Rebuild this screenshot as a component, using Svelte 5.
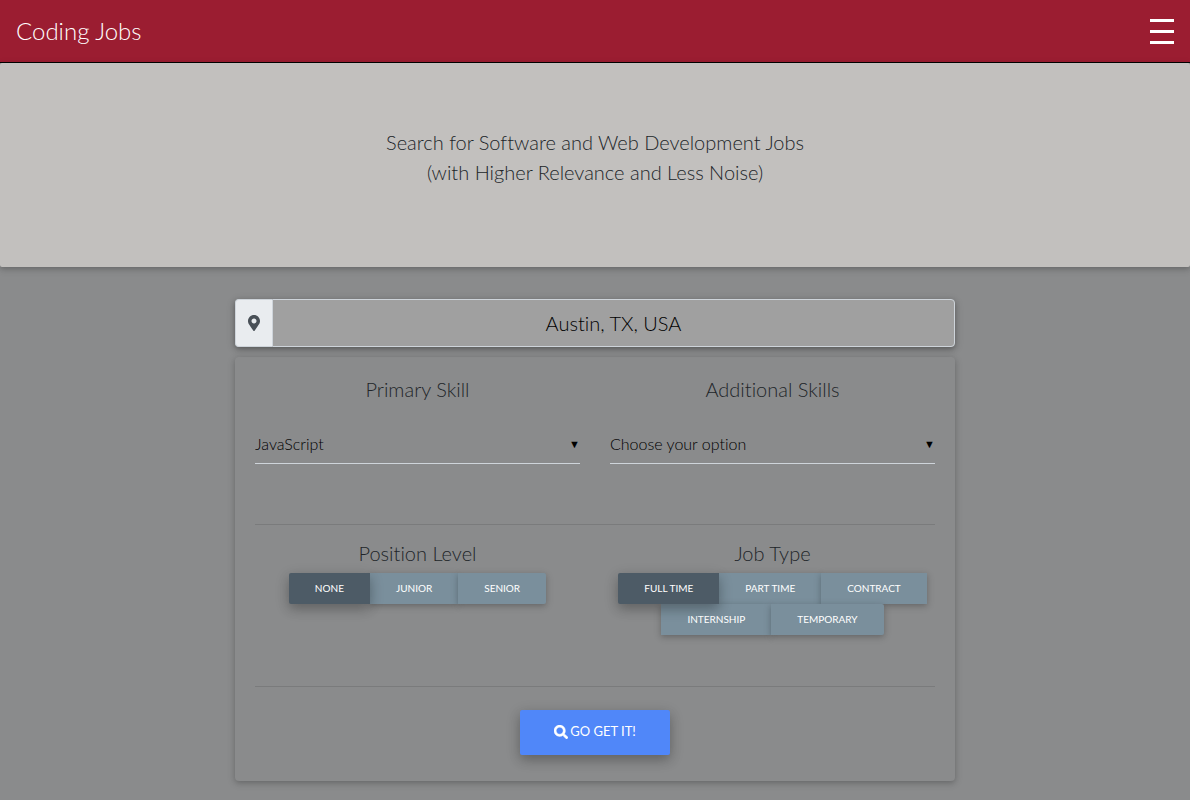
<script>
  const levels = ['None', 'Junior', 'Senior'];
  const jobTypes = ['Full Time', 'Part Time', 'Contract', 'Internship', 'Temporary'];

  let place = $state('Austin, TX, USA');
  let primary = $state('JavaScript');
  let additional = $state('');
  let level = $state('None');
  let jobType = $state('Full Time');
</script>

<header class="navbar">
  <a class="brand" href="#top">Coding Jobs</a>
  <button class="menu" type="button" aria-label="Menu">
    <svg width="24" height="25" viewBox="0 0 24 25" aria-hidden="true">
      <path d="M0 0h24v3H0zM0 11h24v3H0zM0 22h24v3H0z" fill="#fff" />
    </svg>
  </button>
</header>

<section class="hero">
  <h1>Search for Software and Web Development Jobs<br />(with Higher Relevance and Less Noise)</h1>
</section>

<form class="search" onsubmit={(e) => e.preventDefault()}>
  <div class="location">
    <label class="pin" for="place" aria-label="Location">
      <svg width="12" height="16" viewBox="0 0 384 512" aria-hidden="true">
        <path
          fill="#495057"
          d="M172.268 501.67C26.97 291.031 0 269.413 0 192 0 85.961 85.961 0 192 0s192 85.961 192 192c0 77.413-26.97 99.031-172.268 309.67-9.535 13.774-29.93 13.773-39.464 0zM192 272c44.183 0 80-35.817 80-80s-35.817-80-80-80-80 35.817-80 80 35.817 80 80 80z"
        />
      </svg>
    </label>
    <input id="place" type="text" bind:value={place} />
  </div>

  <div class="card">
    <div class="row skills">
      <div class="col">
        <label class="title" for="primary">Primary Skill</label>
        <div class="select">
          <select id="primary" bind:value={primary}>
            <option>JavaScript</option>
            <option>Python</option>
            <option>Java</option>
          </select>
        </div>
      </div>
      <div class="col">
        <label class="title" for="additional">Additional Skills</label>
        <div class="select">
          <select id="additional" bind:value={additional}>
            <option value="">Choose your option</option>
            <option>React</option>
            <option>Node.js</option>
          </select>
        </div>
      </div>
    </div>

    <div class="row toggles">
      <div class="col" role="group" aria-labelledby="level-title">
        <h2 class="title" id="level-title">Position Level</h2>
        <div class="group">
          {#each levels as name}
            <button type="button" class:active={level === name} aria-pressed={level === name} onclick={() => (level = name)}>{name}</button>
          {/each}
        </div>
      </div>
      <div class="col" role="group" aria-labelledby="type-title">
        <h2 class="title" id="type-title">Job Type</h2>
        <div class="group">
          {#each jobTypes as name}
            <button type="button" class:active={jobType === name} aria-pressed={jobType === name} onclick={() => (jobType = name)}>{name}</button>
          {/each}
        </div>
      </div>
    </div>

    <div class="submit">
      <button type="submit">
        <svg width="14" height="14" viewBox="0 0 512 512" aria-hidden="true">
          <path
            fill="#fff"
            stroke="#fff"
            stroke-width="16"
            d="M505 442.700L405.300 343c-4.500-4.500-10.600-7-17-7H372c27.600-35.300 44-79.700 44-128C416 93.100 322.900 0 208 0S0 93.100 0 208s93.100 208 208 208c48.300 0 92.700-16.400 128-44v16.300c0 6.400 2.500 12.500 7 17l99.700 99.700c9.400 9.400 24.600 9.400 33.900 0l28.300-28.300c9.400-9.400 9.400-24.600.1-34zM208 336c-70.700 0-128-57.200-128-128 0-70.700 57.200-128 128-128 70.700 0 128 57.200 128 128 0 70.700-57.200 128-128 128z"
          />
        </svg>
        Go get it!
      </button>
    </div>
  </div>
</form>

<style>
  :global(body) {
    margin: 0;
    background: #8a8b8c;
    color: #212529;
    font-family: Lato, sans-serif;
    font-weight: 300;
    font-variant-ligatures: none;
  }

  button,
  input,
  select {
    margin: 0;
    font-family: inherit;
    font-weight: inherit;
    font-variant-ligatures: none;
  }

  button {
    border: 0;
    color: #fff;
    cursor: pointer;
  }

  .navbar {
    display: flex;
    align-items: center;
    justify-content: space-between;
    padding: 13px 16px;
    border-bottom: 1px solid #000;
    background: #9b1d31;
  }

  .brand {
    color: #fff;
    font-size: 24px;
    line-height: 36px;
    text-decoration: none;
  }

  .menu {
    display: flex;
    padding: 0;
    background: none;
  }

  .hero {
    padding: 64px 16px 80px;
    border-radius: 2px;
    background: #c2c0be;
    box-shadow: 0 2px 5px rgba(0, 0, 0, 0.16), 0 2px 10px rgba(0, 0, 0, 0.12);
    text-align: center;
  }

  h1 {
    margin: 0;
    font-size: 20px;
    font-weight: 300;
    line-height: 30px;
  }

  .search {
    box-sizing: border-box;
    max-width: 750px;
    margin: 32px auto 19px;
    padding: 0 15px;
  }

  .location {
    display: flex;
    margin-bottom: 10px;
    border-radius: 4px;
    box-shadow: 0 2px 5px rgba(0, 0, 0, 0.26), 0 2px 10px rgba(0, 0, 0, 0.16);
  }

  .pin {
    display: flex;
    align-items: center;
    padding: 0 12px;
    border: 1px solid #ced4da;
    border-right: 0;
    border-radius: 4px 0 0 4px;
    background: #e9ecef;
  }

  .location input {
    flex: 1;
    min-width: 0;
    padding: 8px 12px;
    border: 1px solid #ced4da;
    border-radius: 0 4px 4px 0;
    background: #a0a0a0;
    color: #000;
    font-size: 20px;
    line-height: 30px;
    text-align: center;
  }

  .card {
    padding: 17px 20px 26px;
    border-radius: 4px;
    box-shadow: 0 2px 5px rgba(0, 0, 0, 0.16), 0 2px 10px rgba(0, 0, 0, 0.12);
  }

  .row {
    display: grid;
    grid-template-columns: 1fr 1fr;
    gap: 30px;
    border-bottom: 1px solid #7a7b7c;
  }

  .title {
    display: block;
    margin: 0;
    font-size: 20px;
    font-weight: 300;
    line-height: 30px;
    text-align: center;
  }

  .skills {
    padding-bottom: 60px;
  }

  .select {
    position: relative;
    margin-top: 20px;
  }

  .select::after {
    content: '▼';
    position: absolute;
    top: 12px;
    right: 0;
    color: #000;
    font-size: 11px;
    line-height: 16px;
    pointer-events: none;
  }

  select {
    display: block;
    width: 100%;
    height: 40px;
    padding: 0 16px 1px 0;
    border: 0;
    border-bottom: 1px solid #ced4da;
    border-radius: 0;
    background: transparent;
    appearance: none;
    color: #000;
    font-size: 16px;
  }

  .toggles {
    padding: 13px 0 51px;
  }

  .group {
    display: flex;
    flex-wrap: wrap;
    justify-content: center;
    margin-top: 5px;
  }

  .group button {
    padding: 8px 26px;
    background: #7a8f9c;
    box-shadow: 0 2px 5px rgba(0, 0, 0, 0.16), 0 2px 10px rgba(0, 0, 0, 0.12);
    font-size: 10px;
    font-weight: 400;
    line-height: 15px;
    text-transform: uppercase;
  }

  .group button:first-child {
    border-radius: 2px 0 0 2px;
  }

  .group button:last-child {
    border-radius: 0 2px 2px 0;
  }

  .group button.active {
    position: relative;
    background: #4d5b66;
    box-shadow: 0 5px 11px rgba(0, 0, 0, 0.18), 0 4px 15px rgba(0, 0, 0, 0.15);
  }

  .submit {
    display: flex;
    justify-content: center;
    padding-top: 23px;
  }

  .submit button {
    display: flex;
    align-items: center;
    gap: 2px;
    padding: 11px 34px 13px;
    border-radius: 2px;
    background: #5087f9;
    box-shadow: 0 5px 11px rgba(0, 0, 0, 0.18), 0 4px 15px rgba(0, 0, 0, 0.15);
    font-size: 13px;
    font-weight: 400;
    line-height: 21px;
    text-transform: uppercase;
  }
</style>
